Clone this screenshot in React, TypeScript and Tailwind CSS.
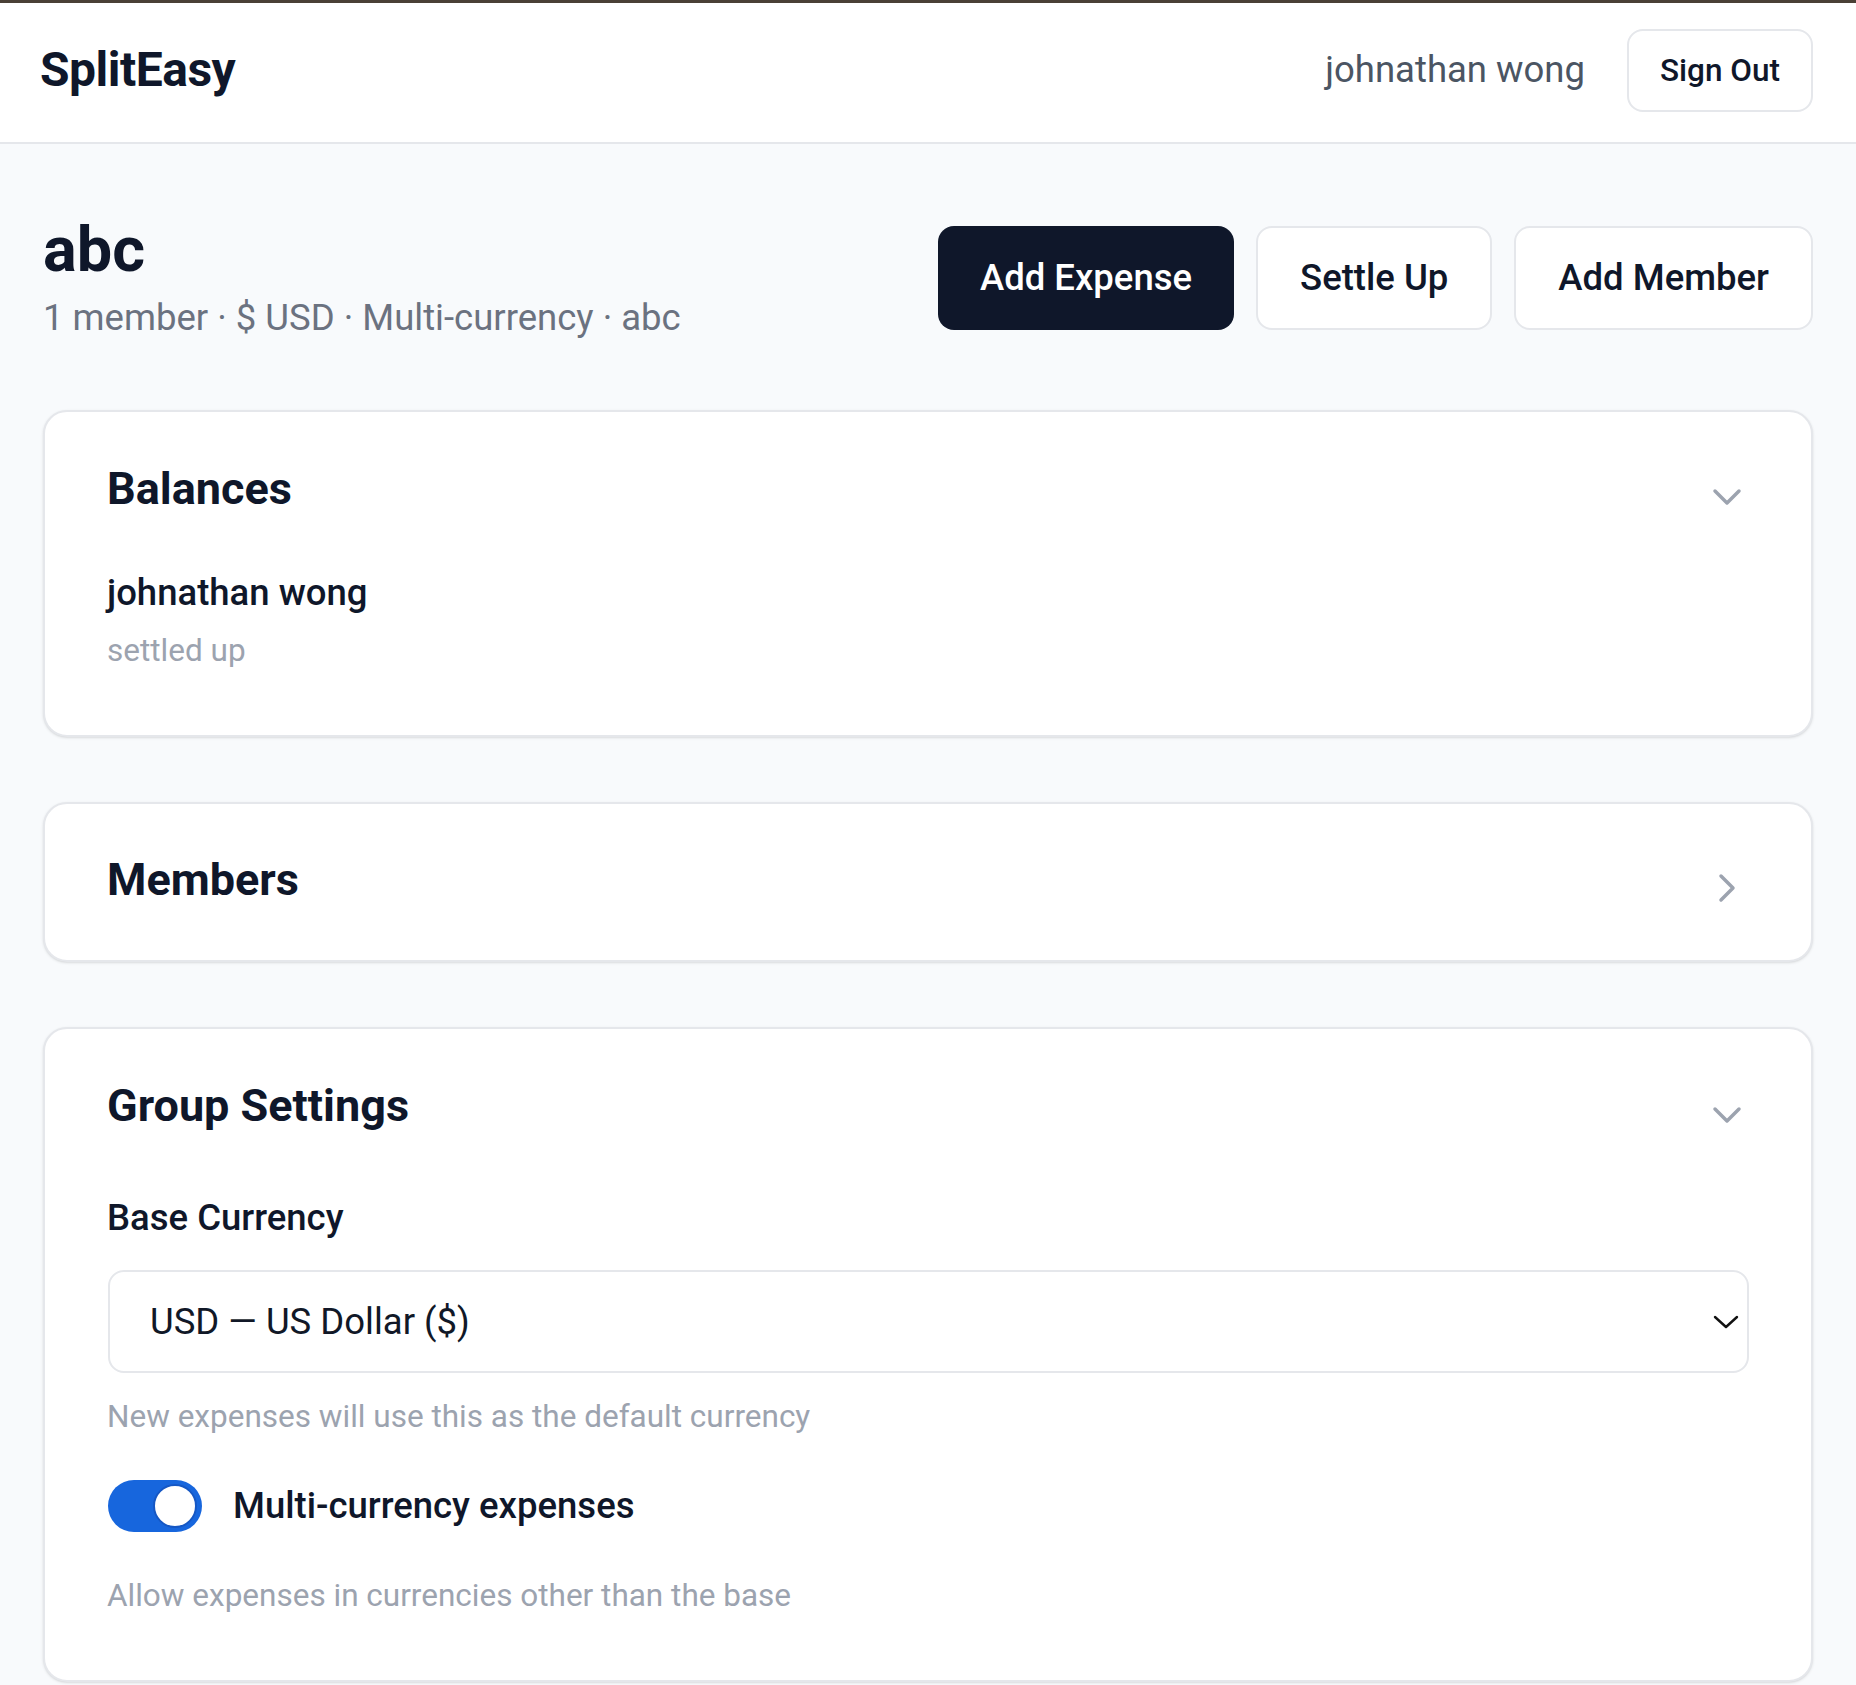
import React from "react";

function ChevronDown({ className = "" }: { className?: string }) {
  return (
    <svg width="32" height="18" viewBox="0 0 32 18" fill="none" className={className}>
      <polyline points="4,3 16,15 28,3" stroke="#9ca3af" strokeWidth="3.5" strokeLinecap="round" strokeLinejoin="round" />
    </svg>
  );
}

function ChevronRight({ className = "" }: { className?: string }) {
  return (
    <svg width="18" height="32" viewBox="0 0 18 32" fill="none" className={className}>
      <polyline points="3,4 15,16 3,28" stroke="#9ca3af" strokeWidth="3.5" strokeLinecap="round" strokeLinejoin="round" />
    </svg>
  );
}

export default function App() {
  return (
    <div className="min-h-screen bg-[#f8fafc] font-['Roboto',_'Noto_Sans',_sans-serif] text-[#0f172a]">
      <div className="h-[3px] bg-[#4a4036]" />
      <header className="h-[141px] bg-white border-b-2 border-[#e5e7eb] flex items-center justify-between pl-[40px] pr-[43px] pb-[4px]">
        <div className="text-[48px] leading-[56px] font-bold tracking-[-0.5px] text-[#0f172a] -mt-[2px]">SplitEasy</div>
        <div className="flex items-center gap-[42px]">
          <span className="text-[36.5px] leading-[48px] text-[#4b5563] -mt-[2px]">johnathan wong</span>
          <button className="h-[83px] px-[31px] rounded-[16px] border-2 border-[#e5e7eb] bg-white text-[31.5px] font-medium text-[#0f172a]">
            Sign Out
          </button>
        </div>
      </header>

      <main className="px-[43px] pt-[70px] pb-[64px]">
        <div className="flex items-center justify-between">
          <div>
            <h1 className="text-[63px] leading-[72px] font-bold text-[#0f172a]">abc</h1>
            <p className="mt-[6px] text-[36.5px] leading-[52px] text-[#6b7280]">1 member · $ USD · Multi-currency · abc</p>
          </div>
          <div className="flex items-center gap-[22px] -mt-[2px]">
            <button className="h-[104px] px-[42px] rounded-[16px] bg-[#0f172a] text-white text-[36.5px] font-medium">Add Expense</button>
            <button className="h-[104px] px-[42px] rounded-[16px] bg-white border-2 border-[#e5e7eb] text-[#0f172a] text-[36.5px] font-medium">Settle Up</button>
            <button className="h-[104px] px-[42px] rounded-[16px] bg-white border-2 border-[#e5e7eb] text-[#0f172a] text-[36.5px] font-medium">Add Member</button>
          </div>
        </div>

        <div className="mt-[66px] flex flex-col gap-[65px]">
          <section className="bg-white border-2 border-[#e5e7eb] rounded-[24px] shadow-sm px-[62px] pt-[49px] pb-[60px]">
            <div className="flex items-center justify-between">
              <h2 className="text-[45px] leading-[56px] font-bold text-[#0f172a]">Balances</h2>
              <div className="w-[32px] flex justify-center mr-[6px] mt-[16px]">
                <ChevronDown />
              </div>
            </div>
            <div className="mt-[50px] text-[36.5px] leading-[52px] font-medium text-[#0f172a]">johnathan wong</div>
            <div className="mt-[8px] text-[31.5px] leading-[48px] text-[#9ca3af]">settled up</div>
          </section>

          <section className="bg-white border-2 border-[#e5e7eb] rounded-[24px] shadow-sm px-[62px] pt-[48px] pb-[52px]">
            <div className="flex items-center justify-between">
              <h2 className="text-[45px] leading-[56px] font-bold text-[#0f172a]">Members</h2>
              <div className="w-[32px] flex justify-center mr-[6px] mt-[16px]">
                <ChevronRight />
              </div>
            </div>
          </section>

          <section className="bg-white border-2 border-[#e5e7eb] rounded-[24px] shadow-sm px-[62px] pt-[49px] pb-[60px]">
            <div className="flex items-center justify-between">
              <h2 className="text-[45px] leading-[56px] font-bold text-[#0f172a]">Group Settings</h2>
              <div className="w-[32px] flex justify-center mr-[6px] mt-[18px]">
                <ChevronDown />
              </div>
            </div>
            <div className="mt-[58px] text-[36.5px] leading-[52px] font-medium text-[#0f172a]">Base Currency</div>
            <div className="mt-[26px] h-[103px] ml-[1px] border-2 border-[#e5e7eb] rounded-[16px] flex items-center justify-between pl-[40px] pr-[8px]">
              <span className="text-[36.5px] leading-[48px] text-[#111827]">USD — US Dollar ($)</span>
              <svg width="26" height="14" viewBox="0 0 26 14" fill="none">
                <polyline points="2,2 13,12 24,2" stroke="#111111" strokeWidth="2.4" strokeLinecap="round" strokeLinejoin="round" />
              </svg>
            </div>
            <div className="mt-[20px] text-[31.5px] leading-[48px] text-[#9ca3af]">New expenses will use this as the default currency</div>
            <div className="mt-[39px] h-[52px] flex items-center gap-[31px] ml-[1px]">
              <div className="relative w-[94px] h-[52px] rounded-full bg-[#1766dd] flex items-center justify-end pr-[5px]">
                <div className="w-[44px] h-[44px] rounded-full bg-white border-2 border-[#1557c4]" />
              </div>
              <span className="text-[36.5px] leading-[48px] font-medium text-[#0f172a]">Multi-currency expenses</span>
            </div>
            <div className="mt-[40px] text-[31.5px] leading-[48px] text-[#9ca3af]">Allow expenses in currencies other than the base</div>
          </section>
        </div>
      </main>
    </div>
  );
}
